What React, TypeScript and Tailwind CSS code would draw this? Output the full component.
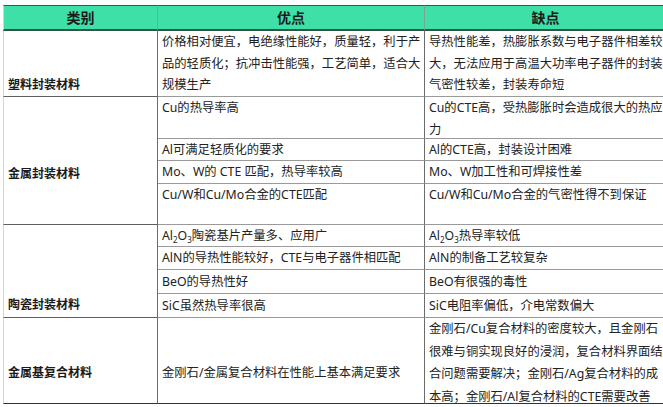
import React from 'react';

const font = { fontFamily: '"Noto Sans", "Noto Sans CJK SC", sans-serif' };

function Sub({ children }: { children: React.ReactNode }) {
    return <sub className="text-[8px] align-baseline relative top-[3px]">{children}</sub>;
}

// 左列分组单元格
function GroupCell({ label, rows, pb }: { label: string; rows: string; pb: string }) {
    return (
        <div className={`${rows} col-start-1 border-l border-l-[#d4d4d4] border-r border-r-[#6b6b6b] border-b border-b-[#5e5e5e] flex flex-col justify-end pl-[4px] ${pb}`}>
            <span className="font-bold text-[12px] leading-[22px] text-[#1a1a1a]">{label}</span>
        </div>
    );
}

function Cell({ children, last, center }: { children: React.ReactNode; last?: boolean; center?: boolean }) {
    return (
        <div
            className={`border-b border-b-[#9a9a9a] pl-[4px] whitespace-nowrap overflow-hidden leading-[21.5px] ${last ? '' : 'border-r border-r-[#6b6b6b]'} ${center ? 'flex items-center' : ''}`}
        >
            <div>{children}</div>
        </div>
    );
}

export default function App() {
    return (
        <div className="w-[663px] h-[407px] bg-white overflow-hidden pt-[5px] pl-[3px] text-[12.3px] text-[#222]" style={font}>
            <div className="grid grid-cols-[155px_267px_250px] grid-rows-[26px_66px_42px_22px_23px_41px_22px_23px_24px_24px_86px] w-[672px]">
                {/* 表头 */}
                <div className="bg-[#3fe0a8] border-t border-t-[#2d5c4a] border-b-2 border-b-[#2f5346] border-l border-l-[#d4d4d4] border-r border-r-[#7aa593] flex items-center justify-center font-bold text-[14px] text-[#1b1b1b]">类别</div>
                <div className="bg-[#3fe0a8] border-t border-t-[#2d5c4a] border-b-2 border-b-[#2f5346] border-r border-r-[#7aa593] flex items-center justify-center font-bold text-[14px] text-[#1b1b1b]">优点</div>
                <div className="bg-[#3fe0a8] border-t border-t-[#2d5c4a] border-b-2 border-b-[#2f5346] flex items-center justify-center font-bold text-[14px] text-[#1b1b1b] pr-[9px]">缺点</div>

                {/* 塑料封装材料 */}
                <GroupCell label="塑料封装材料" rows="row-start-2 row-span-1" pb="pb-0" />
                <Cell>价格相对便宜，电绝缘性能好，质量轻，利于产<br />品的轻质化；抗冲击性能强，工艺简单，适合大<br />规模生产</Cell>
                <Cell last>导热性能差，热膨胀系数与电子器件相差较<br />大，无法应用于高温大功率电子器件的封装<br />气密性较差，封装寿命短</Cell>

                {/* 金属封装材料 */}
                <GroupCell label="金属封装材料" rows="row-start-3 row-span-4" pb="pb-[39px]" />
                <Cell>Cu的热导率高</Cell>
                <Cell last>Cu的CTE高，受热膨胀时会造成很大的热应<br />力</Cell>
                <Cell center>Al可满足轻质化的要求</Cell>
                <Cell last center>Al的CTE高，封装设计困难</Cell>
                <Cell center>Mo、W的 CTE 匹配，热导率较高</Cell>
                <Cell last center>Mo、W加工性和可焊接性差</Cell>
                <Cell>Cu/W和Cu/Mo合金的CTE匹配</Cell>
                <Cell last>Cu/W和Cu/Mo合金的气密性得不到保证</Cell>

                {/* 陶瓷封装材料 */}
                <GroupCell label="陶瓷封装材料" rows="row-start-7 row-span-4" pb="pb-px" />
                <Cell center>Al<Sub>2</Sub>O<Sub>3</Sub>陶瓷基片产量多、应用广</Cell>
                <Cell last center>Al<Sub>2</Sub>O<Sub>3</Sub>热导率较低</Cell>
                <Cell center>AlN的导热性能较好，CTE与电子器件相匹配</Cell>
                <Cell last center>AlN的制备工艺较复杂</Cell>
                <Cell center>BeO的导热性好</Cell>
                <Cell last center>BeO有很强的毒性</Cell>
                <Cell center>SiC虽然热导率很高</Cell>
                <Cell last center>SiC电阻率偏低，介电常数偏大</Cell>

                {/* 金属基复合材料 */}
                <div className="row-start-11 col-start-1 border-l border-l-[#d4d4d4] border-r border-r-[#6b6b6b] border-b border-b-[#333] flex flex-col justify-end pl-[4px] pb-[19px]">
                    <span className="font-bold text-[12px] leading-[22px] text-[#1a1a1a]">金属基复合材料</span>
                </div>
                <div className="border-r border-r-[#6b6b6b] border-b border-b-[#333] flex flex-col justify-end pl-[4px] pb-[19px] whitespace-nowrap">
                    <span className="leading-[22px]">金刚石/金属复合材料在性能上基本满足要求</span>
                </div>
                <div className="border-b border-b-[#333] pl-[4px] leading-[22.5px] whitespace-nowrap">
                    金刚石/Cu复合材料的密度较大，且金刚石<br />很难与铜实现良好的浸润，复合材料界面结<br />合问题需要解决；金刚石/Ag复合材料的成<br />本高；金刚石/Al复合材料的CTE需要改善
                </div>
            </div>
        </div>
    );
}
